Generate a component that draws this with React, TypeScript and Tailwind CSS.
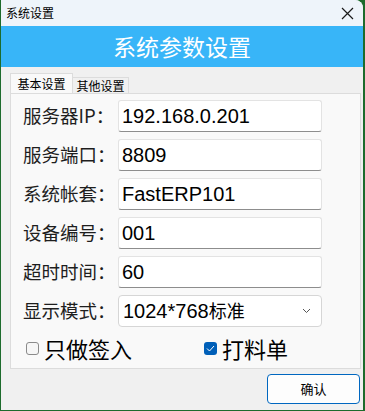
const fields = [
  { label: "服务器IP：", value: "192.168.0.201" },
  { label: "服务端口：", value: "8809" },
  { label: "系统帐套：", value: "FastERP101" },
  { label: "设备编号：", value: "001" },
  { label: "超时时间：", value: "60" },
];

const cjk = "font-['Noto_Sans_CJK_SC',sans-serif]";
const val = "font-['Liberation_Sans','Noto_Sans_CJK_SC',sans-serif]";

const App = () => {
  return (
    <div className="w-[365px] h-[411px] bg-[#1d6b2c] overflow-hidden">
      <div className="ml-[1px] w-[362px] h-[410px] bg-[#f0f0f0] rounded-tr-[8px] overflow-hidden flex flex-col">
        {/* title bar */}
        <div className="h-[26px] bg-[#eef4fa] flex items-center justify-between pl-[5px] pr-[9px]">
          <span className={`${cjk} text-[12px] text-black leading-none`}>系统设置</span>
          <svg width="13" height="13" viewBox="0 0 13 13">
            <path d="M1 1 L12 12 M12 1 L1 12" stroke="#1a1a1a" strokeWidth="1.2" />
          </svg>
        </div>
        <div className="h-[41px] bg-[#38b5f8] flex items-center justify-center">
          <span className={`${cjk} text-[23px] text-white leading-none`}>系统参数设置</span>
        </div>

        <div className="pl-[9px] pr-[2px] pt-[6px]">
          {/* tabs */}
          <div className="flex items-end h-[20px]">
            <div className={`${cjk} h-[20px] w-[63px] bg-[#f9f9f9] border border-b-0 border-[#dcdcdc] text-[12px] flex items-center justify-center text-black`}>
              基本设置
            </div>
            <div className={`${cjk} h-[16px] w-[56px] bg-[#f0f0f0] border border-l-0 border-b-0 border-[#dcdcdc] text-[12px] flex items-center justify-center text-black`}>
              其他设置
            </div>
          </div>

          <div className="h-[276px] bg-[#f9f9f9] border border-[#dcdcdc] pt-[6px] pl-[12px] flex flex-col">
            <div className="flex flex-col gap-[7px]">
              {fields.map((f, i) => (
                <div key={i} className="flex items-center h-[32px]">
                  <span className={`${cjk} w-[95px] text-[18.5px] text-[#1e1e1e] whitespace-nowrap`}>{f.label}</span>
                  <div className={`${val} w-[204px] h-[32px] bg-white border border-[#e3e3e3] border-b-[#8d8d8d] rounded-[3px] pl-[3px] flex items-center text-[20px] text-black`}>
                    {f.value}
                  </div>
                </div>
              ))}
              <div className="flex items-center h-[32px]">
                <span className={`${cjk} w-[95px] text-[18.5px] text-[#1e1e1e] whitespace-nowrap`}>显示模式：</span>
                <div className={`${val} w-[204px] h-[32px] bg-white border border-[#d6d6d6] rounded-[4px] pl-[4px] pr-[10px] flex items-center justify-between text-[20px] text-black`}>
                  <span>
                    1024*768<span className={`${cjk} text-[18px]`}>标准</span>
                  </span>
                  <svg width="9" height="6" viewBox="0 0 9 6">
                    <path d="M1 1 L4.5 4.5 L8 1" stroke="#555" strokeWidth="1" fill="none" />
                  </svg>
                </div>
              </div>
            </div>

            <div className="flex items-center h-[22px] mt-[10px]">
              <div className="flex items-center w-[181px]">
                <div className="ml-[3px] w-[13px] h-[13px] rounded-[3px] border border-[#8a8a8a] bg-[#f6f6f6]" />
                <span className={`${cjk} ml-[5px] text-[22px] text-black leading-none`}>只做签入</span>
              </div>
              <div className="flex items-center">
                <div className="w-[13px] h-[13px] rounded-[3px] bg-[#005fb8] flex items-center justify-center">
                  <svg width="9" height="7" viewBox="0 0 9 7">
                    <path d="M1 3.5 L3.5 6 L8 1" stroke="#fff" strokeWidth="1" fill="none" />
                  </svg>
                </div>
                <span className={`${cjk} ml-[5px] text-[22px] text-black leading-none`}>打料单</span>
              </div>
            </div>
          </div>

          <div className="flex justify-end mt-[5px] pr-[1px]">
            <div className={`${cjk} w-[93px] h-[30px] bg-[#fdfdfd] border border-[#0067c0] rounded-[4px] flex items-center justify-center text-[13px] text-black`}>
              确认
            </div>
          </div>
        </div>
      </div>
    </div>
  );
};

export default App;
